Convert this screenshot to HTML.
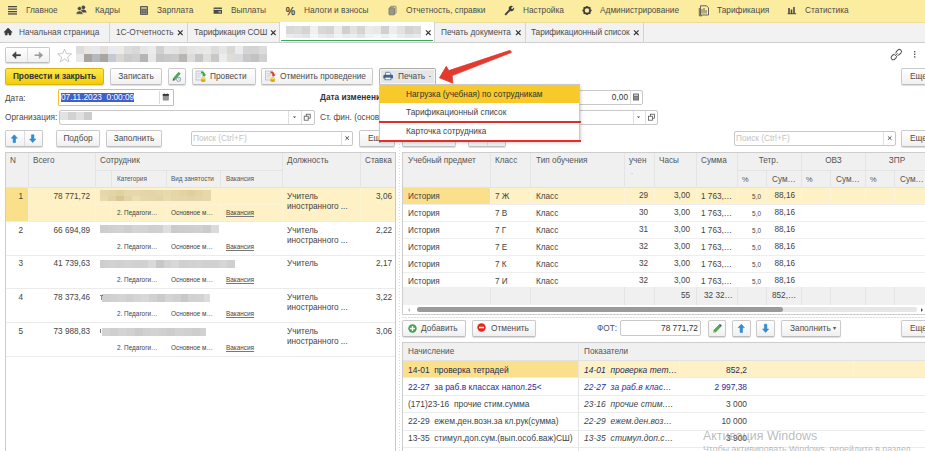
<!DOCTYPE html>
<html><head><meta charset="utf-8">
<style>
*{box-sizing:border-box;margin:0;padding:0}
html,body{width:925px;height:451px;overflow:hidden;background:#fff;font-family:"Liberation Sans",sans-serif;font-size:8.2px;color:#4a4a4a}
.a{position:absolute;white-space:nowrap}
#nav{position:absolute;left:0;top:0;width:925px;height:22px;background:#fbec9f}
#nav .t{position:absolute;top:5px;font-size:8.3px;color:#4d4d4d;line-height:10px}
#tabs{position:absolute;left:0;top:22px;width:925px;height:21px;background:#f2f2f2;border-bottom:1px solid #cfcfcf}
#tabs .t{position:absolute;top:5px;font-size:8.3px;color:#4d4d4d;line-height:10px}
#tabs .sep{position:absolute;top:0;width:1px;height:20px;background:#d4d4d4}
#tabs .x{position:absolute;top:5px;font-size:9px;line-height:10px;color:#444}
.btn{position:absolute;height:16.5px;border:1px solid #cacaca;border-bottom-color:#bdbdbd;border-radius:2px;background:linear-gradient(#fff,#f0f0f0);box-shadow:0 1px 1px rgba(0,0,0,.14);font-size:8.3px;line-height:14.5px;color:#4d4d4d;text-align:center}
.fld{position:absolute;height:15px;border:1px solid #c8c8c8;border-radius:2px;background:#fff}
.hdr{position:absolute;background:#f2f2f2}
.vl{position:absolute;width:1px;background:#e3e3e3}
.hl{position:absolute;height:1px;background:#e3e3e3}
.blur{position:absolute}
</style></head><body>

<div id="nav">
<svg class="a" style="left:0;top:0" width="925" height="22">
 <g fill="#4b4b4b">
  <rect x="8" y="6" width="9" height="1.3"/><rect x="8" y="8.5" width="9" height="1.3"/><rect x="8" y="11" width="9" height="1.3"/><rect x="8" y="13.3" width="9" height="1.3"/>
  <!-- people -->
  <circle cx="83.3" cy="7.3" r="1.9"/><path d="M80.3 12.5 Q80.6 9.6 83.3 9.6 Q86.2 9.6 86.6 12.5 Z"/>
  <circle cx="79.5" cy="8.6" r="2.1" stroke="#fbec9f" stroke-width="0.6"/><path d="M76 14.2 Q76.2 10.9 79.5 10.9 Q82.8 10.9 83.2 14.2 Z" stroke="#fbec9f" stroke-width="0.6"/>
  <!-- calc -->
  <rect x="140" y="6" width="8" height="9" rx="0.8" fill="#5c5c5c"/>
  <rect x="141.2" y="7.2" width="5.6" height="1.6" fill="#cfc9a0"/>
  <g fill="#b8b290"><rect x="141.2" y="9.6" width="1.2" height="1"/><rect x="143.4" y="9.6" width="1.2" height="1"/><rect x="145.6" y="9.6" width="1.2" height="1"/>
  <rect x="141.2" y="11.4" width="1.2" height="1"/><rect x="143.4" y="11.4" width="1.2" height="1"/><rect x="145.6" y="11.4" width="1.2" height="1"/>
  <rect x="141.2" y="13.1" width="1.2" height="1"/><rect x="143.4" y="13.1" width="1.2" height="1"/><rect x="145.6" y="13.1" width="1.2" height="1"/></g>
  <!-- card -->
  <rect x="213.6" y="7.4" width="8.4" height="6.4" rx="0.6" fill="#4b4b4b"/>
  <rect x="213.6" y="8.9" width="8.4" height="1.1" fill="#d8d2a8"/>
  <rect x="218.5" y="11.3" width="2.4" height="1.2" fill="#d8d2a8"/>
 </g>
 <text x="285.8" y="14.6" font-family="Liberation Sans" font-size="10.5" fill="#3a3a3a" stroke="#3a3a3a" stroke-width="0.25">%</text>
 <!-- docs -->
 <g fill="none" stroke="#7a7a6e" stroke-width="0.9">
  <rect x="390.5" y="6.3" width="5.5" height="7" rx="0.6"/>
  <rect x="389" y="7.8" width="5.5" height="7" rx="0.6" fill="#9a9788"/>
 </g>
 <!-- wrench -->
 <path d="M504.5 14.2 L509 9.6 Q508 7 510.2 6 Q511.8 5.5 513 6.2 L511 8 L512.2 9.2 L514 7.4 Q514.8 9.6 512.6 10.9 Q511.3 11.4 510.2 10.9 L505.9 15.4 Z" fill="#3e3e3e"/>
 <!-- gear -->
 <g transform="translate(587,10.5)">
  <circle r="3.1" fill="none" stroke="#3e3e3e" stroke-width="1.7"/>
  <g stroke="#3e3e3e" stroke-width="1.6">
   <path d="M0 -4.6V-3M0 3V4.6M-4.6 0H-3M3 0H4.6M-3.25 -3.25L-2.2 -2.2M2.2 2.2L3.25 3.25M-3.25 3.25L-2.2 2.2M2.2 -2.2L3.25 -3.25"/>
  </g>
 </g>
 <!-- tarif doc -->
 <g fill="none" stroke="#555" stroke-width="0.9">
  <path d="M700.5 5.8 H706.5 L708.5 7.8 V15 H700.5 Z"/>
  <path d="M702 9 V13.5 M704 8 V13.5 M706 10 V13.5"/>
  <path d="M699.3 8 V15.8 H702"/>
 </g>
 <!-- bars -->
 <g fill="#4b4b4b">
  <rect x="788.2" y="8" width="1.6" height="6"/><rect x="790.7" y="9.5" width="1.6" height="4.5"/><rect x="793.2" y="7" width="1.6" height="7"/><rect x="787.6" y="13.2" width="8.6" height="1"/>
 </g>
</svg>

  <div class="t" style="left:26px">Главное</div>
  <div class="t" style="left:95px">Кадры</div>
  <div class="t" style="left:157px">Зарплата</div>
  <div class="t" style="left:231px">Выплаты</div>
  <div class="t" style="left:304px">Налоги и взносы</div>
  <div class="t" style="left:406px">Отчетность, справки</div>
  <div class="t" style="left:523px">Настройка</div>
  <div class="t" style="left:600px">Администрирование</div>
  <div class="t" style="left:717px">Тарификация</div>
  <div class="t" style="left:805px">Статистика</div>
</div>

<div id="tabs"><div class="a" style="left:0;top:0;width:925px;height:1px;background:#e9de9e"></div>
  <div class="t" style="left:19px">Начальная страница</div>
  <div class="sep" style="left:109px"></div>
  <div class="t" style="left:116px">1С-Отчетность</div>
  <svg class="a" style="left:177px;top:6px" width="8" height="8"><path d="M1 2.4 L5.6 7 M5.6 2.4 L1 7" stroke="#333" stroke-width="1.1"/></svg>
  <div class="sep" style="left:187px"></div>
  <div class="t" style="left:194px;letter-spacing:-0.09px">Тарификация СОШ</div>
  <svg class="a" style="left:270px;top:6px" width="8" height="8"><path d="M1 2.4 L5.6 7 M5.6 2.4 L1 7" stroke="#333" stroke-width="1.1"/></svg>
  <div class="sep" style="left:279px"></div>
  <div class="a" style="left:280px;top:0;width:154px;height:20px;background:#fff"></div>
  <div class="a" style="left:281px;top:17.6px;width:152px;height:1.8px;background:#40a860"></div>
  
  <div class="a" style="left:286px;top:4px;width:135px;height:8px;background:linear-gradient(90deg,#d8d8d8 0.00px 7.94px,#dcdcdc 7.94px 15.88px,#d4d4d4 15.88px 23.82px,#f0f0f0 23.82px 31.76px,#d8d8d8 31.76px 39.71px,#d6d4d2 39.71px 47.65px,#ececec 47.65px 55.59px,#d0d0d0 55.59px 63.53px,#e4e2de 63.53px 71.47px,#d4d4d4 71.47px 79.41px,#ebebeb 79.41px 87.35px,#e8e8e6 87.35px 95.29px,#cfd0d2 95.29px 103.24px,#ededed 103.24px 111.18px,#e2e2e2 111.18px 119.12px,#d2d2d2 119.12px 127.06px,#d8d8d8 127.06px 135.00px)"></div>
  <div class="a" style="left:286px;top:12px;width:135px;height:4px;background:linear-gradient(90deg,#ececec 0.00px 7.94px,#e8e8e8 7.94px 15.88px,#e4e4e4 15.88px 23.82px,#f5f5f5 23.82px 31.76px,#eaeaea 31.76px 39.71px,#e8e6e4 39.71px 47.65px,#f2f2f2 47.65px 55.59px,#ececec 55.59px 63.53px,#eeeeee 63.53px 71.47px,#e4e4e4 71.47px 79.41px,#f2f2f2 79.41px 87.35px,#f6f6f6 87.35px 95.29px,#eeeeee 95.29px 103.24px,#f6f6f6 103.24px 111.18px,#ececec 111.18px 119.12px,#e6e6e6 119.12px 127.06px,#eaeaea 127.06px 135.00px)"></div>
  <svg class="a" style="left:0;top:0" width="20" height="20"><path d="M4 10.2 L8.1 6 L12.2 10.2 L11 10.2 L11 13 L9 13 L9 11 L7.2 11 L7.2 13 L5.2 13 L5.2 10.2 Z" fill="#3a3a3a" stroke="#3a3a3a" stroke-width="0.6" stroke-linejoin="round"/></svg>
<svg class="a" style="left:425px;top:6px" width="8" height="8"><path d="M1 2.4 L5.6 7 M5.6 2.4 L1 7" stroke="#333" stroke-width="1.1"/></svg>
  <div class="sep" style="left:434px"></div>
  <div class="t" style="left:441px">Печать документа</div>
  <svg class="a" style="left:515px;top:6px" width="8" height="8"><path d="M1 2.4 L5.6 7 M5.6 2.4 L1 7" stroke="#333" stroke-width="1.1"/></svg>
  <div class="sep" style="left:525px"></div>
  <div class="t" style="left:531px;letter-spacing:-0.08px">Тарификационный список</div>
  <svg class="a" style="left:633px;top:6px" width="8" height="8"><path d="M1 2.4 L5.6 7 M5.6 2.4 L1 7" stroke="#333" stroke-width="1.1"/></svg>
  <div class="sep" style="left:643px"></div>
</div>


<!-- toolbar row 1 -->
<div class="btn" style="left:5px;top:47px;width:45px;height:16px;border-radius:2px"></div><div class="a" style="left:27px;top:48px;width:1px;height:14px;background:#dcdcdc"></div>
<svg class="a" style="left:0;top:40px" width="80" height="30"><path d="M13 15.2 L20.8 15.2" stroke="#444" stroke-width="1.8"/><path d="M12.3 15.2 L16 11.8 L16 18.6 Z" fill="#444" stroke="#444" stroke-width="0.6" stroke-linejoin="round"/><path d="M34.6 15.2 L42 15.2" stroke="#9a9a9a" stroke-width="1.5"/><path d="M42.8 15.2 L39.2 12 L39.2 18.4 Z" fill="#9a9a9a" stroke="#9a9a9a" stroke-width="0.5" stroke-linejoin="round"/></svg>

<svg class="a" style="left:0;top:40px" width="80" height="30"><path d="M64.6 9 L66.5 13.6 L71.6 13.9 L67.6 17.1 L68.9 21.8 L64.6 19.1 L60.3 21.8 L61.6 17.1 L57.6 13.9 L62.7 13.6 Z" fill="none" stroke="#b5bcc4" stroke-width="0.8" stroke-linejoin="round"/></svg>
<div class="a" style="left:76px;top:46px;width:191px;height:8px;background:linear-gradient(90deg,#dcdcdc 0.00px 7.96px,#e8e7e4 7.96px 15.92px,#e8e8ea 15.92px 23.88px,#e3e0dc 23.88px 31.83px,#e8eaef 31.83px 39.79px,#ecebe8 39.79px 47.75px,#dcdcdc 47.75px 55.71px,#d8d8d9 55.71px 63.67px,#e5e5e5 63.67px 71.62px,#ebebeb 71.62px 79.58px,#d0d0d0 79.58px 87.54px,#e5e5e8 87.54px 95.50px,#e3e3e3 95.50px 103.46px,#dedbdb 103.46px 111.42px,#e4e4e4 111.42px 119.38px,#e6e6e6 119.38px 127.33px,#e8e8e8 127.33px 135.29px,#dcdcdc 135.29px 143.25px,#e5e5e5 143.25px 151.21px,#d8d8d8 151.21px 159.17px,#ececec 159.17px 167.12px,#d4d4d4 167.12px 175.08px,#d4d4d4 175.08px 183.04px,#dcdcdc 183.04px 191.00px)"></div><div class="a" style="left:76px;top:54px;width:191px;height:8px;background:linear-gradient(90deg,#e9e9e9 0.00px 7.96px,#a9a49e 7.96px 15.92px,#b3b9bf 15.92px 23.88px,#aaa59f 23.88px 31.83px,#c4cad3 31.83px 39.79px,#d9d7d3 39.79px 47.75px,#cbcbcb 47.75px 55.71px,#cfcfcf 55.71px 63.67px,#b5b5b5 63.67px 71.62px,#e8e8e8 71.62px 79.58px,#c5c5c5 79.58px 87.54px,#c8c8c8 87.54px 95.50px,#cacaca 95.50px 103.46px,#b8b6b4 103.46px 111.42px,#dcdcdc 111.42px 119.38px,#c6c6c6 119.38px 127.33px,#e2dfdb 127.33px 135.29px,#c8c8c8 135.29px 143.25px,#ececec 143.25px 151.21px,#e0ddd9 151.21px 159.17px,#d8dce0 159.17px 167.12px,#c8c8c8 167.12px 175.08px,#c2c2c2 175.08px 183.04px,#d0d0d0 183.04px 191.00px)"></div>

<!-- toolbar row 2 -->
<div class="btn" style="left:5px;top:68px;width:99px;background:linear-gradient(#fde74c,#f4cd07);border-color:#d8b40c;color:#333;font-weight:bold">Провести и закрыть</div>
<div class="btn" style="left:110px;top:68px;width:52px">Записать</div>
<div class="btn" style="left:168px;top:68px;width:18px"></div>
<div class="btn" style="left:192px;top:68px;width:64px;text-align:left;padding-left:17px">Провести</div>
<div class="btn" style="left:261px;top:68px;width:112px;text-align:left;padding-left:18px">Отменить проведение</div>
<div class="btn" style="left:379px;top:68px;width:57px;height:16.5px;background:#e6e6e6;border:1px solid #b3b3b3;border-top:1.5px solid #aaaaaa;box-shadow:inset 0 0 0 1px #f7f7f7;text-align:left;padding-left:18px;line-height:14px">Печать</div><div class="a" style="left:429.2px;top:76px;width:0;height:0;border-left:1.3px solid transparent;border-right:1.3px solid transparent;border-top:1.6px solid #444"></div>
<div class="btn" style="left:901px;top:68px;width:40px;text-align:left;padding-left:8px">Еще</div>

<svg class="a" style="left:0;top:40px" width="925" height="50">
 <!-- link -->
 <g transform="translate(896.3,14.6) rotate(-45)" fill="none" stroke="#4a4a4a" stroke-width="0.95">
  <rect x="0.4" y="-2.1" width="6" height="4.2" rx="2.1"/>
  <rect x="-6.4" y="-2.1" width="6" height="4.2" rx="2.1"/>
 </g>
 <g transform="translate(896.3,14.6) rotate(-45)"><rect x="-1.6" y="-1.1" width="3.2" height="2.2" fill="#fff"/><path d="M-2 0 H2" stroke="#4a4a4a" stroke-width="0.9"/></g>
 <g fill="#555"><rect x="914" y="11" width="1.4" height="1.4"/><rect x="914" y="13.6" width="1.4" height="1.4"/><rect x="914" y="16.2" width="1.4" height="1.4"/></g>
 <!-- pencil -->
 <path d="M173 38.8 L178.6 32.2 L180.3 33.6 L174.6 40.2 Z" fill="#4caf50" stroke="#3a7d3a" stroke-width="0.5"/>
 <path d="M173 38.8 L172.6 40.7 L174.6 40.2 Z" fill="#444"/>
 <circle cx="178.6" cy="39.3" r="2.1" fill="#fff" stroke="#6d8aa6" stroke-width="0.8"/>
 <path d="M178.6 38.2 V39.4 H179.6" stroke="#6d8aa6" stroke-width="0.5" fill="none"/>
 <!-- provesti icon -->
 <rect x="196" y="31" width="7" height="9" fill="#eef1f4" stroke="#aab4be" stroke-width="0.7"/>
 <path d="M197.3 33.5h4M197.3 35.2h4M197.3 36.9h3" stroke="#b9c2ca" stroke-width="0.6"/>
 <path d="M201 31.5 Q204.5 31 205 34.5 L206.3 34.5 L204.2 36.8 L202 34.5 L203.3 34.5 Q203 33 201 33.2 Z" fill="#2faa3a"/>
 <ellipse cx="203.2" cy="38.3" rx="2.3" ry="1" fill="#f2c72a"/><rect x="200.9" y="38.3" width="4.6" height="2.6" fill="#e8b81c"/><ellipse cx="203.2" cy="40.9" rx="2.3" ry="1" fill="#d9a613"/><ellipse cx="203.2" cy="38.3" rx="2.3" ry="0.9" fill="#f9dc5a"/>
 <!-- otmenit icon -->
 <rect x="265.5" y="31" width="7" height="9" fill="#eef1f4" stroke="#aab4be" stroke-width="0.7"/>
 <path d="M266.8 33.5h4M266.8 35.2h4M266.8 36.9h3" stroke="#b9c2ca" stroke-width="0.6"/>
 <path d="M270.5 31.5 Q274 31 274.5 34.5 L275.8 34.5 L273.7 36.8 L271.5 34.5 L272.8 34.5 Q272.5 33 270.5 33.2 Z" fill="#e03a2a"/>
 <ellipse cx="272.7" cy="38.3" rx="2.3" ry="1" fill="#f2c72a"/><rect x="270.4" y="38.3" width="4.6" height="2.6" fill="#e8b81c"/><ellipse cx="272.7" cy="40.9" rx="2.3" ry="1" fill="#d9a613"/><ellipse cx="272.7" cy="38.3" rx="2.3" ry="0.9" fill="#f9dc5a"/>
 <!-- printer -->
 <path d="M385.3 35.5 L385.8 32.3 L389.6 32.3 L390.6 33.3 L390.8 35.5" fill="#fff" stroke="#3f6792" stroke-width="0.8"/>
 <rect x="383.3" y="34.8" width="9.7" height="3.8" rx="1.2" fill="#3a6591"/>
 <rect x="385" y="37.2" width="5.9" height="2.6" fill="#fff" stroke="#3f6792" stroke-width="0.7"/>
</svg>

<!-- form -->
<div class="a" style="left:5px;top:93px;line-height:10px;font-size:8.3px">Дата:</div>
<div class="a" style="left:58px;top:89px;width:116px;height:17px;border:1px solid #f2c12e;border-radius:1px;background:#fff"></div>
<div class="a" style="left:61px;top:93px;width:73px;height:9px;background:#3f5fc9"></div>
<div class="a" style="left:61px;top:92px;line-height:10px;font-size:8.3px;color:#fff">07.11.2023&nbsp; 0:00:09</div>
<div class="a" style="left:159px;top:91px;width:1px;height:13px;background:#dadada"></div>
<div class="a" style="left:5px;top:112px;line-height:10px;font-size:8.3px">Организация:</div>
<div class="fld" style="left:59px;top:110px;width:256px;height:15px"></div>
<div class="a" style="left:60px;top:112px;width:32px;height:8px;background:linear-gradient(90deg,#e2e2e2 0 8px,#d0d2d4 8px 16px,#e0e0e0 16px 24px,#cdcbcb 24px 32px)"></div>
<div class="a" style="left:288px;top:111px;width:1px;height:13px;background:#e0e0e0"></div>
<div class="a" style="left:301px;top:111px;width:1px;height:13px;background:#e0e0e0"></div>
<div class="a" style="left:320px;top:92px;line-height:10px;font-size:8.3px;font-weight:bold;color:#333">Дата изменения</div>
<div class="a" style="left:320px;top:112px;line-height:10px;font-size:8.3px">Ст. фин. (основной)</div>
<div class="fld" style="left:540px;top:90px;width:103px;height:15px"></div>
<div class="a" style="left:630px;top:91px;width:1px;height:13px;background:#e0e0e0"></div>
<div class="a" style="left:560px;top:92px;width:68px;text-align:right;line-height:10px;font-size:8.3px;color:#333">0,00</div>
<div class="fld" style="left:540px;top:110px;width:118px;height:15px"></div>
<div class="a" style="left:633px;top:111px;width:1px;height:13px;background:#e0e0e0"></div>
<div class="a" style="left:645px;top:111px;width:1px;height:13px;background:#e0e0e0"></div>

<!-- left toolbar -->
<div class="btn" style="left:5px;top:130px;width:38px;height:17px"></div><div class="a" style="left:24px;top:131px;width:1px;height:15px;background:#dcdcdc"></div>
<div class="btn" style="left:56px;top:130px;width:44px">Подбор</div>
<div class="btn" style="left:106px;top:130px;width:56px">Заполнить</div>
<div class="fld" style="left:191px;top:131px;width:162px;height:15px"></div>
<div class="a" style="left:341px;top:132px;width:1px;height:13px;background:#e0e0e0"></div>
<div class="a" style="left:193px;top:133px;line-height:10px;font-size:8.3px;color:#c4c4c4">Поиск (Ctrl+F)</div>
<div class="btn" style="left:359px;top:130px;width:36px;text-align:left;padding-left:8px">Еще</div>
<!-- right toolbar -->
<div class="fld" style="left:734px;top:131px;width:162px;height:15px"></div>
<div class="a" style="left:883px;top:132px;width:1px;height:13px;background:#e0e0e0"></div>
<div class="a" style="left:736px;top:133px;line-height:10px;font-size:8.3px;color:#c4c4c4">Поиск (Ctrl+F)</div>
<div class="btn" style="left:901px;top:130px;width:40px;text-align:left;padding-left:8px">Еще</div>

<!-- left table -->
<div class="a" style="left:5px;top:152px;width:391px;height:310px;border:1px solid #cdcdcd;border-right-color:#c8c8c8;background:#fff"></div>
<div class="a" style="left:6px;top:153px;width:389px;height:35px;background:#f0f0f0;border-bottom:1px solid #e2e2e2"></div>
<div class="a" style="left:28px;top:153px;width:1px;height:35px;background:#e4e4e4"></div>
<div class="a" style="left:95px;top:153px;width:1px;height:35px;background:#e4e4e4"></div>
<div class="a" style="left:282px;top:153px;width:1px;height:35px;background:#e4e4e4"></div>
<div class="a" style="left:360px;top:153px;width:1px;height:35px;background:#e4e4e4"></div>
<div class="a" style="left:111px;top:170px;width:1px;height:18px;background:#e4e4e4"></div>
<div class="a" style="left:166px;top:170px;width:1px;height:18px;background:#e4e4e4"></div>
<div class="a" style="left:220px;top:170px;width:1px;height:18px;background:#e4e4e4"></div>
<div class="a" style="left:95px;top:170px;width:187px;height:1px;background:#e4e4e4"></div>
<div class="a" style="left:10px;top:156.4px;line-height:10px;font-size:8.2px;color:#555">N</div>
<div class="a" style="left:33px;top:156.4px;line-height:10px;font-size:8.2px;color:#555">Всего</div>
<div class="a" style="left:100px;top:156.4px;line-height:10px;font-size:8.2px;color:#555">Сотрудник</div>
<div class="a" style="left:287px;top:156.4px;line-height:10px;font-size:8.2px;color:#555">Должность</div>
<div class="a" style="left:365px;top:156.4px;line-height:10px;font-size:8.2px;color:#555">Ставка</div>
<div class="a" style="left:117px;top:175px;line-height:8px;font-size:6.4px;color:#555">Категория</div>
<div class="a" style="left:171px;top:175px;line-height:8px;font-size:6.4px;color:#555">Вид занятости</div>
<div class="a" style="left:226px;top:175px;line-height:8px;font-size:6.4px;color:#555">Вакансия</div>
<div class="a" style="left:6px;top:188px;width:389px;height:33px;background:#fdf1c5"></div>
<div class="a" style="left:6px;top:188px;width:22px;height:33px;background:#fbe08b"></div>
<div class="a" style="left:28px;top:188px;width:1px;height:33px;background:#fbf4d8"></div>
<div class="a" style="left:95px;top:188px;width:1px;height:33px;background:#fbf4d8"></div>
<div class="a" style="left:282px;top:188px;width:1px;height:33px;background:#fbf4d8"></div>
<div class="a" style="left:360px;top:188px;width:1px;height:33px;background:#fbf4d8"></div>
<div class="a" style="left:111px;top:205px;width:1px;height:16px;background:#fbf4d8"></div>
<div class="a" style="left:166px;top:205px;width:1px;height:16px;background:#fbf4d8"></div>
<div class="a" style="left:220px;top:205px;width:1px;height:16px;background:#fbf4d8"></div>
<div class="a" style="left:95px;top:204px;width:187px;height:1px;background:#fbf4d8"></div>
<div class="a" style="left:6px;top:221px;width:389px;height:1px;background:#ebebeb"></div>
<div class="a" style="left:6px;top:192px;width:17px;text-align:right;line-height:10px;font-size:8.2px;color:#444">1</div>
<div class="a" style="left:30px;top:192px;width:60px;text-align:right;line-height:10px;font-size:8.2px;color:#444">78 771,72</div>
<div class="a" style="left:287px;top:192px;line-height:9.5px;font-size:8.2px;color:#444">Учитель<br>иностранного ...</div>
<div class="a" style="left:360px;top:192px;width:32px;text-align:right;line-height:10px;font-size:8.2px;color:#444">3,06</div>
<div class="a" style="left:117px;top:209px;line-height:8px;font-size:6.4px;color:#444">2. Педагоги…</div>
<div class="a" style="left:171px;top:209px;line-height:8px;font-size:6.4px;color:#444">Основное м…</div>
<div class="a" style="left:226px;top:209px;line-height:8px;font-size:6.4px;color:#444;text-decoration:underline;text-decoration-color:#777">Вакансия</div>
<div class="a" style="left:6px;top:255px;width:389px;height:1px;background:#ebebeb"></div>
<div class="a" style="left:6px;top:226px;width:17px;text-align:right;line-height:10px;font-size:8.2px;color:#444">2</div>
<div class="a" style="left:30px;top:226px;width:60px;text-align:right;line-height:10px;font-size:8.2px;color:#444">66 694,89</div>
<div class="a" style="left:287px;top:226px;line-height:9.5px;font-size:8.2px;color:#444">Учитель<br>иностранного ...</div>
<div class="a" style="left:360px;top:226px;width:32px;text-align:right;line-height:10px;font-size:8.2px;color:#444">2,22</div>
<div class="a" style="left:117px;top:243px;line-height:8px;font-size:6.4px;color:#444">2. Педагоги…</div>
<div class="a" style="left:171px;top:243px;line-height:8px;font-size:6.4px;color:#444">Основное м…</div>
<div class="a" style="left:226px;top:243px;line-height:8px;font-size:6.4px;color:#444;text-decoration:underline;text-decoration-color:#777">Вакансия</div>
<div class="a" style="left:6px;top:288px;width:389px;height:1px;background:#ebebeb"></div>
<div class="a" style="left:6px;top:259px;width:17px;text-align:right;line-height:10px;font-size:8.2px;color:#444">3</div>
<div class="a" style="left:30px;top:259px;width:60px;text-align:right;line-height:10px;font-size:8.2px;color:#444">41 739,63</div>
<div class="a" style="left:287px;top:259px;line-height:9.5px;font-size:8.2px;color:#444">Учитель</div>
<div class="a" style="left:360px;top:259px;width:32px;text-align:right;line-height:10px;font-size:8.2px;color:#444">2,17</div>
<div class="a" style="left:117px;top:276px;line-height:8px;font-size:6.4px;color:#444">2. Педагоги…</div>
<div class="a" style="left:171px;top:276px;line-height:8px;font-size:6.4px;color:#444">Основное м…</div>
<div class="a" style="left:226px;top:276px;line-height:8px;font-size:6.4px;color:#444;text-decoration:underline;text-decoration-color:#777">Вакансия</div>
<div class="a" style="left:6px;top:322px;width:389px;height:1px;background:#ebebeb"></div>
<div class="a" style="left:6px;top:293px;width:17px;text-align:right;line-height:10px;font-size:8.2px;color:#444">4</div>
<div class="a" style="left:30px;top:293px;width:60px;text-align:right;line-height:10px;font-size:8.2px;color:#444">78 373,46</div>
<div class="a" style="left:287px;top:293px;line-height:9.5px;font-size:8.2px;color:#444">Учитель<br>иностранного ...</div>
<div class="a" style="left:360px;top:293px;width:32px;text-align:right;line-height:10px;font-size:8.2px;color:#444">3,22</div>
<div class="a" style="left:117px;top:310px;line-height:8px;font-size:6.4px;color:#444">2. Педагоги…</div>
<div class="a" style="left:171px;top:310px;line-height:8px;font-size:6.4px;color:#444">Основное м…</div>
<div class="a" style="left:226px;top:310px;line-height:8px;font-size:6.4px;color:#444;text-decoration:underline;text-decoration-color:#777">Вакансия</div>
<div class="a" style="left:6px;top:356px;width:389px;height:1px;background:#ebebeb"></div>
<div class="a" style="left:6px;top:327px;width:17px;text-align:right;line-height:10px;font-size:8.2px;color:#444">5</div>
<div class="a" style="left:30px;top:327px;width:60px;text-align:right;line-height:10px;font-size:8.2px;color:#444">73 988,83</div>
<div class="a" style="left:287px;top:327px;line-height:9.5px;font-size:8.2px;color:#444">Учитель<br>иностранного ...</div>
<div class="a" style="left:360px;top:327px;width:32px;text-align:right;line-height:10px;font-size:8.2px;color:#444">3,06</div>
<div class="a" style="left:117px;top:344px;line-height:8px;font-size:6.4px;color:#444">2. Педагоги…</div>
<div class="a" style="left:171px;top:344px;line-height:8px;font-size:6.4px;color:#444">Основное м…</div>
<div class="a" style="left:226px;top:344px;line-height:8px;font-size:6.4px;color:#444;text-decoration:underline;text-decoration-color:#777">Вакансия</div>

<!-- name blurs -->
<div class="a" style="left:100px;top:190px;width:111px;height:6px;background:linear-gradient(90deg,#e6d8aa 0.00px 7.93px,#e3d5a6 7.93px 15.86px,#e0d1a0 15.86px 23.79px,#e5d7a9 23.79px 31.71px,#e6d8ab 31.71px 39.64px,#e4d6a8 39.64px 47.57px,#e3d5a8 47.57px 55.50px,#e5d7aa 55.50px 63.43px,#e7daad 63.43px 71.36px,#e4d6a8 71.36px 79.29px,#e2d3a3 79.29px 87.21px,#dfcf9d 87.21px 95.14px,#e2d3a3 95.14px 103.07px,#e6d8ab 103.07px 111.00px)"></div>
<div class="a" style="left:100px;top:196px;width:111px;height:5px;background:linear-gradient(90deg,#e8daae 0.00px 7.93px,#e0d2a2 7.93px 15.86px,#d8c795 15.86px 23.79px,#e2d4a5 23.79px 31.71px,#eadeb3 31.71px 39.64px,#e6d8ab 39.64px 47.57px,#e4d6a8 47.57px 55.50px,#e2d4a6 55.50px 63.43px,#e8dbb0 63.43px 71.36px,#e5d7aa 71.36px 79.29px,#e4d6a8 79.29px 87.21px,#e3d4a6 87.21px 95.14px,#e4d6a8 95.14px 103.07px,#e6d8ab 103.07px 111.00px)"></div>
<div class="a" style="left:100px;top:225px;width:119px;height:8px;background:linear-gradient(90deg,#cdcdcd 0.00px 7.93px,#d0d0d0 7.93px 15.87px,#d2d2d2 15.87px 23.80px,#cecece 23.80px 31.73px,#d4d4d4 31.73px 39.67px,#d3d3d3 39.67px 47.60px,#cfcfcf 47.60px 55.53px,#d0d0d0 55.53px 63.47px,#dedede 63.47px 71.40px,#cbcbcb 71.40px 79.33px,#cdcdcd 79.33px 87.27px,#cecece 87.27px 95.20px,#d0d0d0 95.20px 103.13px,#cbcbcb 103.13px 111.07px,#dadada 111.07px 119.00px)"></div>
<div class="a" style="left:100px;top:260px;width:135px;height:8px;background:linear-gradient(90deg,#cfcfcf 0.00px 7.94px,#d2d2d2 7.94px 15.88px,#d0d0d0 15.88px 23.82px,#d3d3d3 23.82px 31.76px,#d0d0d0 31.76px 39.71px,#d1d1d1 39.71px 47.65px,#d9d9d9 47.65px 55.59px,#c8c8c8 55.59px 63.53px,#d3d3d3 63.53px 71.47px,#d8d8d5 71.47px 79.41px,#cfcfcf 79.41px 87.35px,#d1d1d1 87.35px 95.29px,#d3d3d3 95.29px 103.24px,#d0d0d0 103.24px 111.18px,#d1d1d1 111.18px 119.12px,#d5d5d5 119.12px 127.06px,#cfcfcf 127.06px 135.00px)"></div>
<div class="a" style="left:102px;top:294px;width:108px;height:8px;background:linear-gradient(90deg,#cfcfcf 0.00px 7.86px,#d1d1d1 7.86px 15.71px,#d4d4d6 15.71px 23.57px,#d0d0d0 23.57px 31.43px,#d3d5d7 31.43px 39.29px,#d8d8d8 39.29px 47.14px,#cfd1d3 47.14px 55.00px,#cbcbcb 55.00px 62.86px,#d4d4d4 62.86px 70.71px,#d0d0d0 70.71px 78.57px,#c8c8c8 78.57px 86.43px,#d1d1d1 86.43px 94.29px,#d3d3d3 94.29px 102.14px,#dcdcdc 102.14px 110.00px)"></div>
<div class="a" style="left:102px;top:328px;width:104px;height:8px;background:linear-gradient(90deg,#d3d3d3 0.00px 8.15px,#cfcfcf 8.15px 16.31px,#d4d4d4 16.31px 24.46px,#d1d1d1 24.46px 32.62px,#cacbcd 32.62px 40.77px,#d0d0d0 40.77px 48.92px,#d3d3d3 48.92px 57.08px,#d0d0d0 57.08px 65.23px,#cdcdcd 65.23px 73.38px,#d2d2d2 73.38px 81.54px,#d0d0d0 81.54px 89.69px,#cdcdcd 89.69px 97.85px,#d1d1d1 97.85px 106.00px)"></div>
<div class="a" style="left:99.5px;top:294.5px;width:3px;height:0.8px;background:#777"></div><div class="a" style="left:100.6px;top:294.5px;width:0.9px;height:5px;background:#888"></div><div class="a" style="left:100px;top:329px;width:1px;height:4px;background:#8a7a6a"></div>
<!-- right table -->
<div class="a" style="left:402px;top:152px;width:540px;height:163px;border:1px solid #cdcdcd;background:#fff"></div>
<div class="a" style="left:403px;top:153px;width:540px;height:35px;background:#f0f0f0;border-bottom:1px solid #e2e2e2"></div>
<div class="a" style="left:490px;top:153px;width:1px;height:35px;background:#e4e4e4"></div>
<div class="a" style="left:530px;top:153px;width:1px;height:35px;background:#e4e4e4"></div>
<div class="a" style="left:624px;top:153px;width:1px;height:35px;background:#e4e4e4"></div>
<div class="a" style="left:654px;top:153px;width:1px;height:35px;background:#e4e4e4"></div>
<div class="a" style="left:696px;top:153px;width:1px;height:35px;background:#e4e4e4"></div>
<div class="a" style="left:737px;top:153px;width:1px;height:35px;background:#e4e4e4"></div>
<div class="a" style="left:801px;top:153px;width:1px;height:35px;background:#e4e4e4"></div>
<div class="a" style="left:865px;top:153px;width:1px;height:35px;background:#e4e4e4"></div>
<div class="a" style="left:766px;top:170px;width:1px;height:18px;background:#e4e4e4"></div>
<div class="a" style="left:830px;top:170px;width:1px;height:18px;background:#e4e4e4"></div>
<div class="a" style="left:894px;top:170px;width:1px;height:18px;background:#e4e4e4"></div>
<div class="a" style="left:737px;top:170px;width:200px;height:1px;background:#e4e4e4"></div>
<div class="a" style="left:408px;top:156.4px;line-height:10px;font-size:8.2px;color:#555">Учебный предмет</div>
<div class="a" style="left:495px;top:156.4px;line-height:10px;font-size:8.2px;color:#555">Класс</div>
<div class="a" style="left:536px;top:156.4px;line-height:10px;font-size:8.2px;color:#555">Тип обучения</div>
<div class="a" style="left:629px;top:156.4px;line-height:10px;font-size:8.2px;color:#555">учен</div>
<div class="a" style="left:659px;top:156.4px;line-height:10px;font-size:8.2px;color:#555">Часы</div>
<div class="a" style="left:701px;top:156.4px;line-height:10px;font-size:8.2px;color:#555">Сумма</div>
<div class="a" style="left:631px;top:168px;line-height:8px;font-size:7px;color:#999">.</div>
<div class="a" style="left:737px;top:156.4px;width:63px;text-align:center;line-height:10px;font-size:8.2px;color:#555">Тетр.</div>
<div class="a" style="left:801px;top:156.4px;width:65px;text-align:center;line-height:10px;font-size:8.2px;color:#555">ОВЗ</div>
<div class="a" style="left:865px;top:156.4px;width:64px;text-align:center;line-height:10px;font-size:8.2px;color:#555">ЗПР</div>
<div class="a" style="left:742px;top:175px;line-height:10px;font-size:7.4px;color:#555">%</div>
<div class="a" style="left:772px;top:175px;line-height:10px;font-size:8.2px;color:#555">Сум…</div>
<div class="a" style="left:806px;top:175px;line-height:10px;font-size:7.4px;color:#555">%</div>
<div class="a" style="left:836px;top:175px;line-height:10px;font-size:8.2px;color:#555">Сум…</div>
<div class="a" style="left:870px;top:175px;line-height:10px;font-size:7.4px;color:#555">%</div>
<div class="a" style="left:900px;top:175px;line-height:10px;font-size:8.2px;color:#555">Сум…</div>
<div class="a" style="left:403px;top:188px;width:530px;height:17px;background:#fdf1c5"></div>
<div class="a" style="left:403px;top:188px;width:87px;height:17px;background:#fbe08b"></div>
<div class="a" style="left:490px;top:188px;width:1px;height:17px;background:#fbf4d8"></div>
<div class="a" style="left:530px;top:188px;width:1px;height:17px;background:#fbf4d8"></div>
<div class="a" style="left:624px;top:188px;width:1px;height:17px;background:#fbf4d8"></div>
<div class="a" style="left:654px;top:188px;width:1px;height:17px;background:#fbf4d8"></div>
<div class="a" style="left:696px;top:188px;width:1px;height:17px;background:#fbf4d8"></div>
<div class="a" style="left:737px;top:188px;width:1px;height:17px;background:#fbf4d8"></div>
<div class="a" style="left:801px;top:188px;width:1px;height:17px;background:#fbf4d8"></div>
<div class="a" style="left:865px;top:188px;width:1px;height:17px;background:#fbf4d8"></div>
<div class="a" style="left:766px;top:188px;width:1px;height:17px;background:#fbf4d8"></div>
<div class="a" style="left:830px;top:188px;width:1px;height:17px;background:#fbf4d8"></div>
<div class="a" style="left:894px;top:188px;width:1px;height:17px;background:#fbf4d8"></div>
<div class="a" style="left:403px;top:204px;width:530px;height:1px;background:#eeeeee"></div>
<div class="a" style="left:408px;top:192px;line-height:10px;font-size:8.2px;color:#444">История</div>
<div class="a" style="left:495px;top:192px;line-height:10px;font-size:8.2px;color:#444">7 Ж</div>
<div class="a" style="left:536px;top:192px;line-height:10px;font-size:8.2px;color:#444">Класс</div>
<div class="a" style="left:624px;top:191px;width:24px;text-align:right;line-height:10px;font-size:8.2px;color:#444">29</div>
<div class="a" style="left:654px;top:191px;width:36px;text-align:right;line-height:10px;font-size:8.2px;color:#444">3,00</div>
<div class="a" style="left:701px;top:192px;line-height:10px;font-size:8.2px;color:#444">1 763,…</div>
<div class="a" style="left:737px;top:192px;width:24px;text-align:right;line-height:9px;font-size:6.4px;color:#444">5,0</div>
<div class="a" style="left:766px;top:191px;width:29px;text-align:right;line-height:10px;font-size:8.2px;color:#444">88,16</div>
<div class="a" style="left:403px;top:221px;width:530px;height:1px;background:#eeeeee"></div>
<div class="a" style="left:408px;top:209px;line-height:10px;font-size:8.2px;color:#444">История</div>
<div class="a" style="left:495px;top:209px;line-height:10px;font-size:8.2px;color:#444">7 В</div>
<div class="a" style="left:536px;top:209px;line-height:10px;font-size:8.2px;color:#444">Класс</div>
<div class="a" style="left:624px;top:208px;width:24px;text-align:right;line-height:10px;font-size:8.2px;color:#444">30</div>
<div class="a" style="left:654px;top:208px;width:36px;text-align:right;line-height:10px;font-size:8.2px;color:#444">3,00</div>
<div class="a" style="left:701px;top:209px;line-height:10px;font-size:8.2px;color:#444">1 763,…</div>
<div class="a" style="left:737px;top:209px;width:24px;text-align:right;line-height:9px;font-size:6.4px;color:#444">5,0</div>
<div class="a" style="left:766px;top:208px;width:29px;text-align:right;line-height:10px;font-size:8.2px;color:#444">88,16</div>
<div class="a" style="left:403px;top:238px;width:530px;height:1px;background:#eeeeee"></div>
<div class="a" style="left:408px;top:226px;line-height:10px;font-size:8.2px;color:#444">История</div>
<div class="a" style="left:495px;top:226px;line-height:10px;font-size:8.2px;color:#444">7 Г</div>
<div class="a" style="left:536px;top:226px;line-height:10px;font-size:8.2px;color:#444">Класс</div>
<div class="a" style="left:624px;top:225px;width:24px;text-align:right;line-height:10px;font-size:8.2px;color:#444">31</div>
<div class="a" style="left:654px;top:225px;width:36px;text-align:right;line-height:10px;font-size:8.2px;color:#444">3,00</div>
<div class="a" style="left:701px;top:226px;line-height:10px;font-size:8.2px;color:#444">1 763,…</div>
<div class="a" style="left:737px;top:226px;width:24px;text-align:right;line-height:9px;font-size:6.4px;color:#444">5,0</div>
<div class="a" style="left:766px;top:225px;width:29px;text-align:right;line-height:10px;font-size:8.2px;color:#444">88,16</div>
<div class="a" style="left:403px;top:255px;width:530px;height:1px;background:#eeeeee"></div>
<div class="a" style="left:408px;top:243px;line-height:10px;font-size:8.2px;color:#444">История</div>
<div class="a" style="left:495px;top:243px;line-height:10px;font-size:8.2px;color:#444">7 Е</div>
<div class="a" style="left:536px;top:243px;line-height:10px;font-size:8.2px;color:#444">Класс</div>
<div class="a" style="left:624px;top:242px;width:24px;text-align:right;line-height:10px;font-size:8.2px;color:#444">32</div>
<div class="a" style="left:654px;top:242px;width:36px;text-align:right;line-height:10px;font-size:8.2px;color:#444">3,00</div>
<div class="a" style="left:701px;top:243px;line-height:10px;font-size:8.2px;color:#444">1 763,…</div>
<div class="a" style="left:737px;top:243px;width:24px;text-align:right;line-height:9px;font-size:6.4px;color:#444">5,0</div>
<div class="a" style="left:766px;top:242px;width:29px;text-align:right;line-height:10px;font-size:8.2px;color:#444">88,16</div>
<div class="a" style="left:403px;top:272px;width:530px;height:1px;background:#eeeeee"></div>
<div class="a" style="left:408px;top:260px;line-height:10px;font-size:8.2px;color:#444">История</div>
<div class="a" style="left:495px;top:260px;line-height:10px;font-size:8.2px;color:#444">7 К</div>
<div class="a" style="left:536px;top:260px;line-height:10px;font-size:8.2px;color:#444">Класс</div>
<div class="a" style="left:624px;top:259px;width:24px;text-align:right;line-height:10px;font-size:8.2px;color:#444">32</div>
<div class="a" style="left:654px;top:259px;width:36px;text-align:right;line-height:10px;font-size:8.2px;color:#444">3,00</div>
<div class="a" style="left:701px;top:260px;line-height:10px;font-size:8.2px;color:#444">1 763,…</div>
<div class="a" style="left:737px;top:260px;width:24px;text-align:right;line-height:9px;font-size:6.4px;color:#444">5,0</div>
<div class="a" style="left:766px;top:259px;width:29px;text-align:right;line-height:10px;font-size:8.2px;color:#444">88,16</div>
<div class="a" style="left:403px;top:289px;width:530px;height:1px;background:#eeeeee"></div>
<div class="a" style="left:408px;top:277px;line-height:10px;font-size:8.2px;color:#444">История</div>
<div class="a" style="left:495px;top:277px;line-height:10px;font-size:8.2px;color:#444">7 И</div>
<div class="a" style="left:536px;top:277px;line-height:10px;font-size:8.2px;color:#444">Класс</div>
<div class="a" style="left:624px;top:276px;width:24px;text-align:right;line-height:10px;font-size:8.2px;color:#444">32</div>
<div class="a" style="left:654px;top:276px;width:36px;text-align:right;line-height:10px;font-size:8.2px;color:#444">3,00</div>
<div class="a" style="left:701px;top:277px;line-height:10px;font-size:8.2px;color:#444">1 763,…</div>
<div class="a" style="left:737px;top:277px;width:24px;text-align:right;line-height:9px;font-size:6.4px;color:#444">5,0</div>
<div class="a" style="left:766px;top:276px;width:29px;text-align:right;line-height:10px;font-size:8.2px;color:#444">88,16</div>
<div class="a" style="left:403px;top:287px;width:530px;height:18px;background:#f0f0f0"></div>
<div class="a" style="left:490px;top:287px;width:1px;height:18px;background:#e4e4e4"></div>
<div class="a" style="left:530px;top:287px;width:1px;height:18px;background:#e4e4e4"></div>
<div class="a" style="left:624px;top:287px;width:1px;height:18px;background:#e4e4e4"></div>
<div class="a" style="left:654px;top:287px;width:1px;height:18px;background:#e4e4e4"></div>
<div class="a" style="left:696px;top:287px;width:1px;height:18px;background:#e4e4e4"></div>
<div class="a" style="left:737px;top:287px;width:1px;height:18px;background:#e4e4e4"></div>
<div class="a" style="left:801px;top:287px;width:1px;height:18px;background:#e4e4e4"></div>
<div class="a" style="left:865px;top:287px;width:1px;height:18px;background:#e4e4e4"></div>
<div class="a" style="left:766px;top:287px;width:1px;height:18px;background:#e4e4e4"></div>
<div class="a" style="left:830px;top:287px;width:1px;height:18px;background:#e4e4e4"></div>
<div class="a" style="left:894px;top:287px;width:1px;height:18px;background:#e4e4e4"></div>
<div class="a" style="left:654px;top:291px;width:36px;text-align:right;line-height:10px;font-size:8.2px;color:#444">55</div>
<div class="a" style="left:704px;top:291px;line-height:10px;font-size:8.2px;color:#444">32 32…</div>
<div class="a" style="left:772px;top:291px;line-height:10px;font-size:8.2px;color:#444">852,…</div>
<div class="a" style="left:403px;top:305px;width:530px;height:8px;background:#fff"></div>
<div class="a" style="left:417px;top:307px;width:500px;height:5px;border-radius:3px;background:#e6e6e6"></div>
<div class="a" style="left:417px;top:307px;width:366px;height:5px;border-radius:3px;background:#9a9a9a"></div>
<div class="a" style="left:408px;top:306px;width:0;height:0;border-top:2px solid transparent;border-bottom:2px solid transparent;border-right:2.5px solid #b8b8b8;top:307.5px"></div>
<div class="a" style="left:921px;top:308px;width:0;height:0;border-top:2px solid transparent;border-bottom:2px solid transparent;border-left:2px solid #555"></div>

<!-- bottom -->
<div class="a" style="left:398.5px;top:126px;width:1px;height:325px;background:repeating-linear-gradient(#dddddd 0 1.5px,transparent 1.5px 3px)"></div>
<div class="a" style="left:402px;top:317px;width:523px;height:1px;background:repeating-linear-gradient(90deg,#dddddd 0 2px,transparent 2px 3px)"></div>
<div class="btn" style="left:402px;top:320px;width:64px;text-align:left;padding-left:18px">Добавить</div>
<svg class="a" style="left:407.5px;top:323.5px" width="9" height="9" viewBox="0 0 9 9"><circle cx="4.5" cy="4.5" r="4.2" fill="#3aa845"/><path d="M4.5 2v5M2 4.5h5" stroke="#fff" stroke-width="1.4"/></svg>
<div class="btn" style="left:472px;top:320px;width:64px;text-align:left;padding-left:18px">Отменить</div>
<svg class="a" style="left:477px;top:323px" width="9" height="9" viewBox="0 0 9 9"><circle cx="4.5" cy="4.5" r="4.2" fill="#e0291c"/><path d="M2 4.5h5" stroke="#fff" stroke-width="1.5"/></svg>
<div class="a" style="left:597px;top:323px;line-height:10px;font-size:8.3px;color:#555">ФОТ:</div>
<div class="fld" style="left:620px;top:320px;width:81px;height:16px"></div>
<div class="a" style="left:622px;top:323px;width:76px;text-align:right;line-height:10px;font-size:8.3px;color:#333">78 771,72</div>
<div class="btn" style="left:708px;top:320px;width:18px"></div>
<div class="btn" style="left:732px;top:320px;width:19px"></div>
<div class="btn" style="left:756px;top:320px;width:19px"></div>
<div class="btn" style="left:781px;top:320px;width:60px;text-align:left;padding-left:8px">Заполнить <span style="font-size:6px;position:relative;top:-1px">&#9662;</span></div>
<div class="btn" style="left:901px;top:320px;width:40px;text-align:left;padding-left:8px">Еще</div>
<div class="a" style="left:402px;top:342px;width:540px;height:120px;border:1px solid #cdcdcd;background:#fff"></div>
<div class="a" style="left:403px;top:343px;width:540px;height:18px;background:#f0f0f0;border-bottom:1px solid #e2e2e2"></div>
<div class="a" style="left:578px;top:343px;width:1px;height:110px;background:#e4e4e4"></div>
<div class="a" style="left:408px;top:347px;line-height:10px;font-size:8.2px;color:#555">Начисление</div>
<div class="a" style="left:584px;top:347px;line-height:10px;font-size:8.2px;color:#555">Показатели</div>
<div class="a" style="left:403px;top:361px;width:175px;height:17px;background:#fbe08b"></div>
<div class="a" style="left:579px;top:361px;width:350px;height:17px;background:#fdf1c5"></div>
<div class="a" style="left:679px;top:361px;width:1px;height:17px;background:#fbf4d8"></div>
<div class="a" style="left:751px;top:361px;width:1px;height:17px;background:#fbf4d8"></div>
<div class="a" style="left:853px;top:361px;width:1px;height:17px;background:#fbf4d8"></div>
<div class="a" style="left:403px;top:377px;width:530px;height:1px;background:#ebebeb"></div>
<div class="a" style="left:408px;top:365px;line-height:10px;font-size:8.45px;color:#2a2a55">14-01&nbsp; проверка тетрадей</div>
<div class="a" style="left:584px;top:365px;line-height:10px;font-size:8.45px;color:#2a2a55;font-style:italic;letter-spacing:0.05px">14-01&nbsp; проверка тет…</div>
<div class="a" style="left:680px;top:365px;width:67px;text-align:right;line-height:10px;font-size:8.4px;color:#2a2a55">852,2</div>
<div class="a" style="left:403px;top:395px;width:530px;height:1px;background:#ebebeb"></div>
<div class="a" style="left:408px;top:382px;line-height:10px;font-size:8.45px;color:#2b2b9a">22-27&nbsp; за раб.в классах напол.25&lt;</div>
<div class="a" style="left:584px;top:382px;line-height:10px;font-size:8.45px;color:#2b2b9a;font-style:italic;letter-spacing:0.05px">22-27&nbsp; за раб.в клас…</div>
<div class="a" style="left:680px;top:382px;width:67px;text-align:right;line-height:10px;font-size:8.4px;color:#2b2b9a">2 997,38</div>
<div class="a" style="left:403px;top:412px;width:530px;height:1px;background:#ebebeb"></div>
<div class="a" style="left:408px;top:399px;line-height:10px;font-size:8.45px;color:#444">(171)23-16&nbsp; прочие стим.сумма</div>
<div class="a" style="left:584px;top:399px;line-height:10px;font-size:8.45px;color:#444;font-style:italic;letter-spacing:0.05px">23-16&nbsp; прочие стим.…</div>
<div class="a" style="left:680px;top:399px;width:67px;text-align:right;line-height:10px;font-size:8.4px;color:#444">3 000</div>
<div class="a" style="left:403px;top:430px;width:530px;height:1px;background:#ebebeb"></div>
<div class="a" style="left:408px;top:416px;line-height:10px;font-size:8.45px;color:#444">22-29&nbsp; ежем.ден.возн.за кл.рук(сумма)</div>
<div class="a" style="left:584px;top:416px;line-height:10px;font-size:8.45px;color:#444;font-style:italic;letter-spacing:0.05px">22-29&nbsp; ежем.ден.воз…</div>
<div class="a" style="left:680px;top:416px;width:67px;text-align:right;line-height:10px;font-size:8.4px;color:#444">10 000</div>
<div class="a" style="left:403px;top:447px;width:530px;height:1px;background:#ebebeb"></div>
<div class="a" style="left:408px;top:433px;line-height:10px;font-size:8.45px;color:#444">13-35&nbsp; стимул.доп.сум.(вып.особ.важ)СШ)</div>
<div class="a" style="left:584px;top:433px;line-height:10px;font-size:8.45px;color:#444;font-style:italic;letter-spacing:0.05px">13-35&nbsp; стимул.доп.с…</div>
<div class="a" style="left:680px;top:433px;width:67px;text-align:right;line-height:10px;font-size:8.4px;color:#444">3 900</div>
<div class="a" style="left:703px;top:429px;line-height:14px;font-size:12.4px;color:rgba(150,150,150,.65)">Активация Windows</div>
<div class="a" style="left:703px;top:444px;line-height:10px;font-size:8.8px;color:rgba(150,150,150,.65)">Чтобы активировать Windows, перейдите в раздел</div>

<svg class="a" style="left:0;top:0" width="925" height="451"><rect x="162.8" y="94" width="6" height="6.4" rx="0.6" fill="#8a8a8a"/><rect x="162.8" y="94" width="6" height="1.8" fill="#333"/><path d="M164.3 93.3v1.2M167.3 93.3v1.2" stroke="#333" stroke-width="0.6"/><path d="M163.3 97.3h5M163.3 98.8h5M164.8 96v4M166.8 96v4" stroke="#a9a9a9" stroke-width="0.4"/><path d="M293.0 116.4 L296.0 116.4 L294.5 118.10000000000001 Z" fill="#333"/><rect x="306.2" y="114.2" width="4" height="4" fill="none" stroke="#555" stroke-width="0.8"/><rect x="304.2" y="116.2" width="4" height="4" fill="#fff" stroke="#555" stroke-width="0.8"/><path d="M637.0 116.4 L640.0 116.4 L638.5 118.10000000000001 Z" fill="#333"/><rect x="650.5" y="114.2" width="4" height="4" fill="none" stroke="#555" stroke-width="0.8"/><rect x="648.5" y="116.2" width="4" height="4" fill="#fff" stroke="#555" stroke-width="0.8"/><rect x="633" y="93.5" width="6" height="7" rx="0.6" fill="#6e6e6e"/><rect x="634" y="94.5" width="4" height="1.3" fill="#ddd"/><path d="M634 97.3h4M634 99h4" stroke="#bbb" stroke-width="0.6"/><path d="M345.4 136.3 L349 139.9 M349 136.3 L345.4 139.9" stroke="#444" stroke-width="0.9"/><path d="M887.9 136.3 L891.5 139.9 M891.5 136.3 L887.9 139.9" stroke="#444" stroke-width="0.9"/><path d="M14.3 134.8 L17.400000000000002 138.20000000000002 L15.5 138.20000000000002 L15.5 142.5 L13.100000000000001 142.5 L13.100000000000001 138.20000000000002 L11.200000000000001 138.20000000000002 Z" fill="#2d8fd8" stroke="#1c78c0" stroke-width="0.5" stroke-linejoin="round"/><path d="M32.7 142.5 L35.800000000000004 139.1 L33.900000000000006 139.1 L33.900000000000006 134.8 L31.500000000000004 134.8 L31.500000000000004 139.1 L29.6 139.1 Z" fill="#2d8fd8" stroke="#1c78c0" stroke-width="0.5" stroke-linejoin="round"/><path d="M713.6 330.6 L719.2 324.8 L721 326.4 L715.3 332.2 Z" fill="#4caf50" stroke="#2e7d32" stroke-width="0.5"/><path d="M719.2 324.8 L720 324 L721.8 325.6 L721 326.4 Z" fill="#445"/><path d="M713.6 330.6 L712.9 332.9 L715.3 332.2 Z" fill="#d9a55a"/><path d="M741.3 324.2 L744.4 327.59999999999997 L742.5 327.59999999999997 L742.5 332.4 L740.0999999999999 332.4 L740.0999999999999 327.59999999999997 L738.1999999999999 327.59999999999997 Z" fill="#2d8fd8" stroke="#1c78c0" stroke-width="0.5" stroke-linejoin="round"/><path d="M765.6 332.4 L768.7 329.0 L766.8000000000001 329.0 L766.8000000000001 324.2 L764.4 324.2 L764.4 329.0 L762.5 329.0 Z" fill="#2d8fd8" stroke="#1c78c0" stroke-width="0.5" stroke-linejoin="round"/></svg>
<div class="btn" style="left:402px;top:130px;width:54px"></div><div class="btn" style="left:468px;top:130px;width:38px"></div><div class="a" style="left:487px;top:131px;width:1px;height:15px;background:#dcdcdc"></div>
<!-- popup -->
<div class="a" style="left:379px;top:84px;width:201px;height:57px;background:#fff;border:1px solid #c9c9c9;box-shadow:1px 2px 3px rgba(0,0,0,.18)"></div>
<div class="a" style="left:380px;top:85px;width:199px;height:18px;background:#f8c92a"></div>
<div class="a" style="left:406px;top:89px;line-height:10px;font-size:8.3px;color:#333">Нагрузка (учебная) по сотрудникам</div>
<div class="a" style="left:406px;top:107px;line-height:10px;font-size:8.3px;color:#444">Тарификационный список</div>
<div class="a" style="left:406px;top:126px;line-height:10px;font-size:8.3px;color:#444">Карточка сотрудника</div>
<div class="a" style="left:379px;top:121px;width:202px;height:2px;background:#e0302a"></div>
<div class="a" style="left:379px;top:140px;width:202px;height:2px;background:#e0302a"></div>
<svg class="a" style="left:0;top:0" width="925" height="451"><path d="M439.5 77.8 L446.3 66.3 L448.8 70.6 L509.3 50.6 Q511.5 50.4 511.2 52.6 L452.2 75.6 L452.8 83.2 Z" fill="#e33a2f" stroke="#e33a2f" stroke-width="0.8" stroke-linejoin="round"/></svg>
</body></html>
